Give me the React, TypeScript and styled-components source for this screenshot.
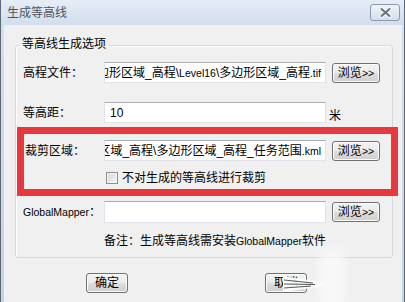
import React from 'react';
import styled, { createGlobalStyle } from 'styled-components';

const GlobalStyle = createGlobalStyle`
  html, body {
    margin: 0;
    padding: 0;
    background: #f0f0f0;
  }
  body {
    font-family: "Liberation Sans", "Noto Sans CJK SC", sans-serif;
    font-size: 12px;
    color: #000;
  }
`;

const Window = styled.div`
  position: relative;
  box-sizing: border-box;
  width: 405px;
  height: 302px;
  overflow: hidden;
  display: flex;
  flex-direction: column;
  border-left: 1px solid #5e6876;
  border-right: 1px solid #5e6876;
  background: linear-gradient(#d6e1ef, #c3d2e5);
`;

const TitleBar = styled.div`
  flex: 0 0 25px;
  display: flex;
  align-items: center;
  padding: 0 4px 0 6px;
  background: linear-gradient(#e6edf6, #d2deed);
`;

const Title = styled.span`
  font-size: 12px;
  color: #4e545c;
  line-height: 16px;
`;

const CloseButton = styled.div`
  margin-left: auto;
  width: 30px;
  height: 17px;
  box-sizing: border-box;
  border: 1px solid #8a99ae;
  border-radius: 3px;
  background: linear-gradient(#eef3f9, #d4deeb);
  display: flex;
  align-items: center;
  justify-content: center;
`;

const Body = styled.div`
  flex: 1;
  margin: 0 2px 0 3px;
  padding: 11px 9px 0 11px;
  background: #f0f0f0;
`;

const Group = styled.fieldset`
  margin: 0;
  padding: 0 0 8px 6px;
  border: 1px solid #d5d9dd;
  border-radius: 3px;
  box-shadow: inset 1px 1px 0 #fff;
`;

const Legend = styled.legend`
  margin-left: -2px;
  padding: 0 2px 3px;
  font-size: 12px;
  line-height: 16px;
`;

const Row = styled.div<{ $top: number; $height: number }>`
  display: grid;
  grid-template-columns: 76px 222px 48px;
  column-gap: 6px;
  align-items: center;
  margin-top: ${({ $top }) => $top}px;
  height: ${({ $height }) => $height}px;
`;

const Label = styled.span<{ $indent?: number }>`
  padding-left: ${({ $indent }) => $indent ?? 1}px;
  font-size: 12px;
  line-height: 16px;
  white-space: nowrap;
`;

const Lat = styled.span`
  font-size: 10.5px;
`;

const TextBox = styled.div<{ $align?: 'start' | 'end' }>`
  box-sizing: border-box;
  height: 100%;
  display: flex;
  align-items: center;
  justify-content: ${({ $align }) => ($align === 'start' ? 'flex-start' : 'flex-end')};
  overflow: hidden;
  white-space: nowrap;
  padding: 0 4px 0 5px;
  background: #fff;
  border: 1px solid #e2e3ea;
  border-top-color: #abadb3;
  font-size: 12px;
  line-height: 16px;
`;

const Button = styled.div<{ $width: number }>`
  box-sizing: border-box;
  width: ${({ $width }) => $width}px;
  height: 20px;
  display: flex;
  align-items: center;
  justify-content: center;
  border: 1px solid #707070;
  border-radius: 3px;
  background: linear-gradient(#f3f3f3 0%, #ebebeb 50%, #dddddd 51%, #cfcfcf 100%);
  box-shadow: inset 0 0 0 1px #fbfbfb;
  font-size: 12px;
  line-height: 16px;
  white-space: nowrap;
`;

const Unit = styled.span`
  margin-left: -3px;
  padding-top: 4px;
  font-size: 12px;
`;

const CheckLine = styled.label`
  grid-column: 2 / span 2;
  display: flex;
  align-items: center;
  gap: 4px;
  padding-left: 2px;
  font-size: 12px;
  line-height: 16px;
`;

const CheckBox = styled.span`
  box-sizing: border-box;
  width: 12px;
  height: 12px;
  border: 1px solid #8e8f8f;
  background: linear-gradient(135deg, #d6d6d6, #f7f7f7);
  box-shadow: inset 0 0 0 1px #f4f4f4;
`;

const Note = styled.div`
  margin-top: 10px;
  padding-left: 82px;
  height: 16px;
  font-size: 12px;
  line-height: 16px;
  white-space: nowrap;
`;

const Footer = styled.div`
  display: flex;
  gap: 137px;
  margin: 15px 0 0 71px;
`;

const Highlight = styled.div`
  position: absolute;
  left: 16px;
  top: 127px;
  width: 381px;
  height: 69px;
  box-sizing: border-box;
  border: 7px solid #e6383d;
  pointer-events: none;
`;

const Smudge = styled.svg`
  position: absolute;
  left: 280px;
  top: 272px;
  pointer-events: none;
`;

const Haze = styled.div`
  position: absolute;
  left: 318px;
  top: 250px;
  width: 26px;
  height: 60px;
  background: rgba(255, 255, 255, 0.55);
  filter: blur(5px);
  pointer-events: none;
`;

const CloseGlyph = () => (
  <svg width="13" height="11" viewBox="0 0 13 11">
    <path d="M2.5 2 L10.5 9 M10.5 2 L2.5 9" stroke="#f4f6f9" strokeWidth="4.2" strokeLinecap="round" />
    <path d="M2.5 2 L10.5 9 M10.5 2 L2.5 9" stroke="#6c717a" strokeWidth="2" strokeLinecap="round" />
  </svg>
);

const App: React.FC = () => (
  <>
    <GlobalStyle />
    <Window>
      <TitleBar>
        <Title>生成等高线</Title>
        <CloseButton>
          <CloseGlyph />
        </CloseButton>
      </TitleBar>
      <Body>
        <Group>
          <Legend>等高线生成选项</Legend>
          <Row $top={7} $height={21}>
            <Label>高程文件：</Label>
            <TextBox>
              多边形区域_高程\<Lat>Level16</Lat>\多边形区域_高程<Lat>.tif</Lat>
            </TextBox>
            <Button $width={48}>浏览<Lat>&gt;&gt;</Lat></Button>
          </Row>
          <Row $top={19} $height={21}>
            <Label>等高距：</Label>
            <TextBox $align="start">10</TextBox>
            <Unit>米</Unit>
          </Row>
          <Row $top={17} $height={21}>
            <Label $indent={3}>裁剪区域：</Label>
            <TextBox>
              多边形区域_高程\多边形区域_高程_任务范围<Lat>.kml</Lat>
            </TextBox>
            <Button $width={48}>浏览<Lat>&gt;&gt;</Lat></Button>
          </Row>
          <Row $top={9} $height={15}>
            <CheckLine>
              <CheckBox />
              不对生成的等高线进行裁剪
            </CheckLine>
          </Row>
          <Row $top={16} $height={22}>
            <Label><Lat>GlobalMapper</Lat>：</Label>
            <TextBox />
            <Button $width={48}>浏览<Lat>&gt;&gt;</Lat></Button>
          </Row>
          <Note>备注：生成等高线需安装<Lat>GlobalMapper</Lat>软件</Note>
        </Group>
        <Footer>
          <Button $width={42}>确定</Button>
          <Button $width={42}>取消</Button>
        </Footer>
      </Body>
      <Highlight />
      <Haze />
      <Smudge width="46" height="24" viewBox="0 0 46 24">
        <defs>
          <linearGradient id="fade" x1="0" x2="1" y1="0" y2="0">
            <stop offset="0" stopColor="#ffffff" stopOpacity="0.97" />
            <stop offset="0.7" stopColor="#ffffff" stopOpacity="0.8" />
            <stop offset="1" stopColor="#ffffff" stopOpacity="0" />
          </linearGradient>
        </defs>
        <polygon points="2,4 46,11 46,14 2,20" fill="url(#fade)" />
        <path d="M3 8 L32 11 M3 12 L34 12.5 M3 16 L30 14" stroke="#3c3c3c" strokeWidth="1.1" strokeOpacity="0.85" />
      </Smudge>
    </Window>
  </>
);

export default App;
